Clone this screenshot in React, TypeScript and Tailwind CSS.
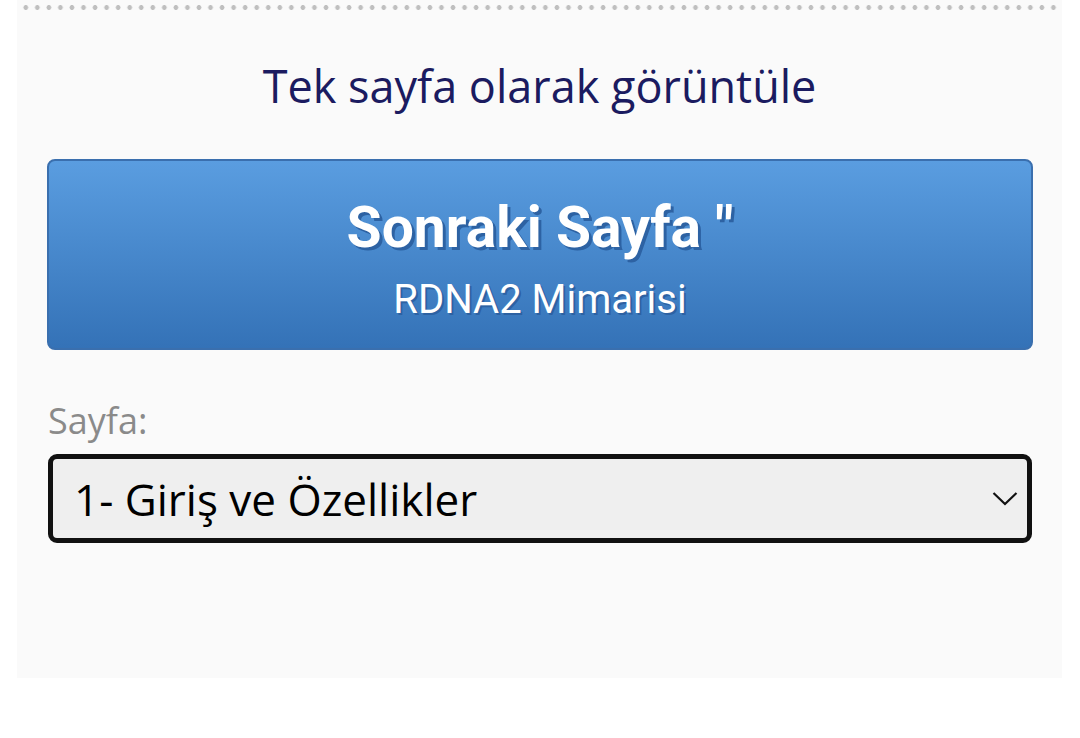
import React from "react";

export default function App() {
  return (
    <div className="w-[1080px] h-[738px] bg-white overflow-hidden">
      <div className="ml-[17px] w-[1045px] h-[678px] bg-[#fafafa] flex flex-col">
        <div className="mx-[3px] mt-[1px] h-[13px] bg-[radial-gradient(circle,#bfbfbf_2.1px,transparent_2.7px)] bg-[length:11.55px_13px]" />
        <div
          className="mt-[42px] text-center text-[45px] leading-[60px] text-[#1b1b60]"
          style={{ fontFamily: '"Open Sans", "Noto Sans", sans-serif' }}
        >
          Tek sayfa olarak görüntüle
        </div>
        <div className="mt-[43px] ml-[30px] mr-[29px] h-[191px] rounded-[8px] border-2 border-[#3a6fae] bg-[linear-gradient(to_bottom,#5a9de0,#3472b7)] flex flex-col items-center text-white"
          style={{ fontFamily: 'Roboto, "Liberation Sans", sans-serif' }}
        >
          <div className="mt-[37px] text-[57px] leading-[60px] font-bold [text-shadow:3px_3px_0_#2d62a3]">
            Sonraki Sayfa "
          </div>
          <div className="mt-[20px] text-[40px] leading-[44px] [text-shadow:2px_2px_0_#2d62a3]">
            RDNA2 Mimarisi
          </div>
        </div>
        <div
          className="mt-[49px] ml-[31px] text-[36px] leading-[44px] text-[#8a8a8a]"
          style={{ fontFamily: '"Open Sans", "Noto Sans", sans-serif' }}
        >
          Sayfa:
        </div>
        <div
          className="mt-[11px] ml-[31px] mr-[30px] h-[89px] rounded-[9px] border-[5px] border-[#111111] bg-[#efefef] flex items-center justify-between pl-[21px] pr-[9px]"
          style={{ fontFamily: '"Open Sans", "Noto Sans", sans-serif' }}
        >
          <span className="text-[44px] leading-[52px] text-black">1- Giriş ve Özellikler</span>
          <svg width="26" height="16" viewBox="0 0 26 16" fill="none">
            <path d="M1.5 2 L13 13 L24.5 2" stroke="#111" strokeWidth="2.2" />
          </svg>
        </div>
      </div>
    </div>
  );
}
